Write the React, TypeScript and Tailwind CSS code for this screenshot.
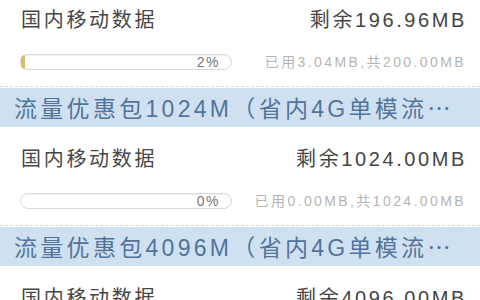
import React from "react";

type Block = {
  remain: string;
  pct?: number;
  used?: string;
  total?: string;
  header?: string;
};

const blocks: Block[] = [
  { remain: "196.96MB", pct: 2, used: "3.04MB", total: "200.00MB", header: "流量优惠包1024M（省内4G单模流⋯" },
  { remain: "1024.00MB", pct: 0, used: "0.00MB", total: "1024.00MB", header: "流量优惠包4096M（省内4G单模流⋯" },
  { remain: "4096.00MB" },
];

function Progress({ pct }: { pct: number }) {
  return (
    <div className="relative flex h-[16px] w-[212px] items-center justify-end rounded-full border border-[#d9d9d9] bg-white pr-[11px] shadow-[inset_0_1px_1px_rgba(0,0,0,0.06)]">
      {pct > 0 && (
        <div
          className="absolute left-0 top-0 h-full rounded-l-full bg-[#dcbb6e]"
          style={{ width: `${Math.max(4, (pct / 100) * 210)}px` }}
        />
      )}
      <span className="text-[14px] leading-[14px] tracking-[1.5px] text-[#777]">{pct}%</span>
    </div>
  );
}

export default function App() {
  return (
    <div
      className="h-[300px] w-[480px] overflow-hidden bg-white"
      style={{ fontFamily: '"Liberation Sans", "Noto Sans CJK SC", sans-serif' }}
    >
      {blocks.map((b, i) => (
        <div key={i}>
          <div className={i === 0 ? "pt-0" : "pt-[12px]"}>
            <div className="flex h-[40px] items-center justify-between pl-[21px] pr-[13px]">
              <span className="text-[20px] leading-[22px] tracking-[2.7px] text-[#474747]">国内移动数据</span>
              <span className="text-[20px] leading-[22px] tracking-[2.6px] text-[#444]">剩余{b.remain}</span>
            </div>
            {b.pct !== undefined && (
              <div className="mt-[2px] flex h-[40px] items-center justify-between pl-[20px] pr-[14px]">
                <Progress pct={b.pct} />
                <span className="text-[14px] leading-[16px] tracking-[2.4px] text-[#b5b5b5]">
                  已用{b.used},共{b.total}
                </span>
              </div>
            )}
          </div>
          {b.header && (
            <>
              <div className="mt-[4px] border-t border-dashed border-[#dadada]" />
              <div className="mt-[1px] flex h-[39px] items-center whitespace-nowrap bg-[#cfe1f1] pl-[14px] pt-[2px]">
                <span className="text-[23px] leading-[26px] tracking-[3.3px] text-[#52739a]">{b.header}</span>
              </div>
            </>
          )}
        </div>
      ))}
    </div>
  );
}
